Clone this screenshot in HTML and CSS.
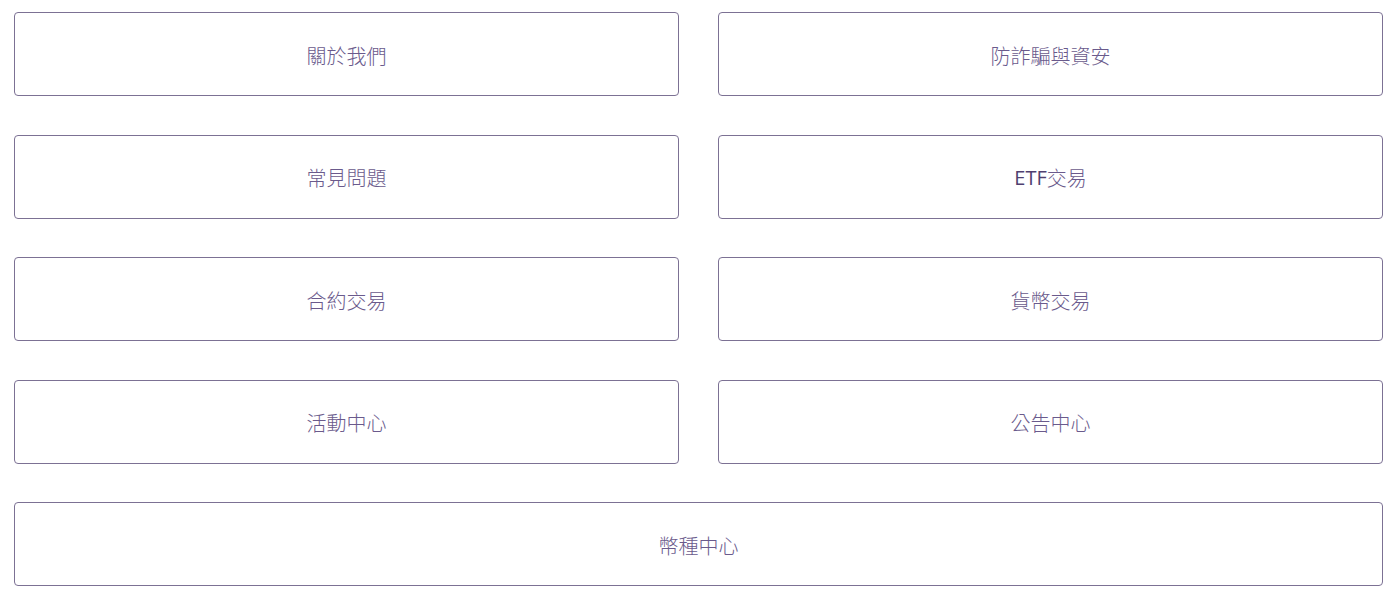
FILE: index.html
```html
<!DOCTYPE html>
<html lang="zh-Hant">
<head>
    <meta charset="UTF-8">
    <meta name="viewport" content="width=device-width, initial-scale=1.0">
    <title>幫助中心</title>
    <link rel="stylesheet" href="styles.css">
</head>
<body>
    <nav class="link-grid">
        <a class="link-card" href="#">關於我們</a>
        <a class="link-card" href="#">防詐騙與資安</a>
        <a class="link-card" href="#">常見問題</a>
        <a class="link-card" href="#"><span class="latin">ETF</span>交易</a>
        <a class="link-card" href="#">合約交易</a>
        <a class="link-card" href="#">貨幣交易</a>
        <a class="link-card" href="#">活動中心</a>
        <a class="link-card" href="#">公告中心</a>
        <a class="link-card wide" href="#">幣種中心</a>
    </nav>
</body>
</html>
```

FILE: styles.css
```css
body {
    margin: 0;
    background-color: #ffffff;
    font-family: "Open Sans", "Noto Sans CJK TC", sans-serif;
}

.link-grid {
    display: grid;
    grid-template-columns: 1fr 1fr;
    column-gap: 39px;
    row-gap: 38.5px;
    padding: 12px 17px 0 14px;
}

.link-card {
    display: flex;
    align-items: center;
    justify-content: center;
    height: 84px;
    box-sizing: border-box;
    padding-top: 2px;
    border: 1px solid #7c7194;
    border-radius: 4px;
    color: #6a5a8c;
    font-size: 20px;
    font-weight: 300;
    text-decoration: none;
}

.latin {
    font-weight: 400;
    color: #4f3f70;
}

.wide {
    grid-column: 1 / 3;
}
```
